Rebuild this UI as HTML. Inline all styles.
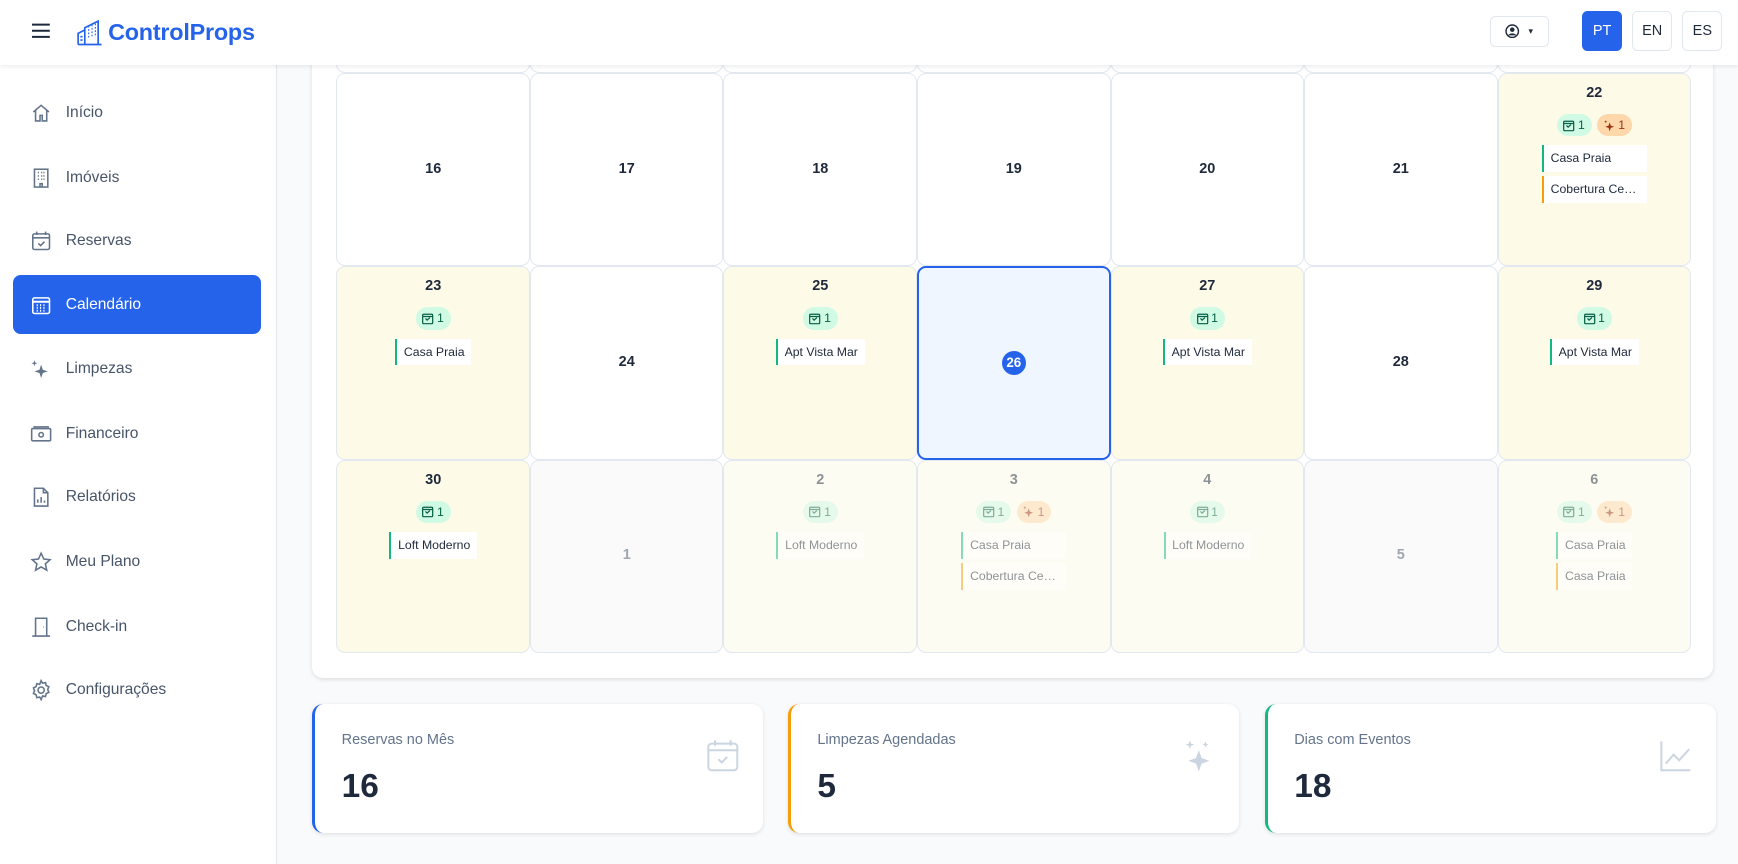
<!DOCTYPE html>
<html><head><meta charset="utf-8">
<style>
*{box-sizing:border-box;margin:0;padding:0}
html,body{width:1738px;height:864px;overflow:hidden;background:#f8fafc;font-family:"Liberation Sans",sans-serif;color:#1e293b}
#root{zoom:1.1141;width:1560px;height:776px;position:relative;overflow:hidden;background:#f8fafc}
.header{position:absolute;left:0;top:0;width:1560px;height:58px;background:#fff;box-shadow:0 2px 4px rgba(0,0,0,.08);z-index:5}
.side{position:absolute;left:0;top:58px;width:249px;height:718px;background:#fff;border-right:1px solid #e5e7eb;z-index:4}
.nav{position:absolute;left:12px;width:222px;height:53px;border-radius:7px;display:flex;align-items:center;padding-left:15px;font-size:14px;color:#475569}
.nav svg{width:20px;height:20px;margin-right:12px;fill:none;stroke:#64748b;stroke-width:1.4}
.nav.active{background:#2563eb;color:#fff}
.nav.active svg{stroke:#fff}
.card{position:absolute;left:280px;top:-200px;width:1258px;height:809px;background:#fff;border-radius:10px;box-shadow:0 1px 4px rgba(0,0,0,.12)}
.grid{position:absolute;left:302px;top:-108px;display:grid;grid-template-columns:repeat(7,173.7px);grid-auto-rows:173.5px}
.c{border:1px solid #e2e8f0;border-radius:8px;background:#fff;display:flex;flex-direction:column;align-items:center;padding-top:10px;font-size:13px;position:relative}
.c.e{justify-content:center;padding-top:0}
.c.y{background:#fefae8}
.c.o{background:#fafafa}
.c.o>*{opacity:.5}
.c.oy{background:#fdfcf2}
.c.oy>*{opacity:.5}
.n{font-weight:bold;font-size:13px;height:16px;line-height:16px;color:#1e293b}
.bd{display:flex;gap:5px;margin-top:10px;height:20px}
.p{height:20px;border-radius:10px;padding:0 6px 0 5px;display:flex;align-items:center;font-size:11px;gap:2px}
.p.g{background:#d1fae5;color:#065f46}
.p.r{background:#fed7aa;color:#9a3412}
.p svg{width:12px;height:12px}
.cw{display:flex;flex-direction:column;align-items:stretch;margin-top:8px;max-width:94px}
.ch{background:#fff;font-size:11px;height:24px;line-height:24px;padding:0 6px 0 6px;border-left:2px solid #10b981;white-space:nowrap;overflow:hidden;text-overflow:ellipsis;color:#1e293b}
.ch+.ch{margin-top:4px}
.ch.or{border-left-color:#f59e0b}
.today{background:#eff6ff;border:2px solid #2563eb;justify-content:center;padding-top:0}
.tc{width:22px;height:22px;border-radius:50%;background:#2563eb;color:#fff;font-weight:bold;font-size:12px;display:flex;align-items:center;justify-content:center}
.stat{position:absolute;top:632px;width:405px;height:116px;background:#fff;border-radius:10px;box-shadow:0 1px 4px rgba(0,0,0,.1);padding:25px 0 0 24px;border-left:3px solid}
.stat .t{font-size:13px;color:#64748b}
.stat .v{font-size:30px;font-weight:bold;color:#1e293b;margin-top:18px}
.stat svg{position:absolute;right:20px;top:30px;width:32px;height:32px;fill:none;stroke:#cbd5e1;stroke-width:1.8}
.btn{position:absolute;top:10px;height:36px;width:36px;border:1px solid #e2e8f0;border-radius:5px;font-size:13px;display:flex;align-items:center;justify-content:center;color:#1e293b;background:#fff}
</style></head><body><div id="root">

<div class="card"></div>
<div class="grid">
<div class="c"></div><div class="c"></div><div class="c"></div><div class="c"></div><div class="c"></div><div class="c"></div><div class="c"></div>
<div class="c e"><div class="n">16</div></div>
<div class="c e"><div class="n">17</div></div>
<div class="c e"><div class="n">18</div></div>
<div class="c e"><div class="n">19</div></div>
<div class="c e"><div class="n">20</div></div>
<div class="c e"><div class="n">21</div></div>
<div class="c y"><div class="n">22</div><div class="bd"><div class="p g"><svg viewBox="0 0 12 12" fill="none" stroke="#065f46" stroke-width="1.1"><rect x="1.5" y="2" width="9" height="8.5" rx="1"/><path d="M1.5 4h9M4 5.8l1.5 1.5L8 5"/></svg>1</div><div class="p r"><svg viewBox="0 0 12 12" fill="#9a3412"><path d="M6 3l1 3 3 1-3 1-1 3-1-3-3-1 3-1z"/><path d="M2.5 1l.4 1 1 .4-1 .4-.4 1-.4-1-1-.4 1-.4z"/></svg>1</div></div><div class="cw"><div class="ch">Casa Praia</div><div class="ch or">Cobertura Central</div></div></div>
<div class="c y"><div class="n">23</div><div class="bd"><div class="p g"><svg viewBox="0 0 12 12" fill="none" stroke="#065f46" stroke-width="1.1"><rect x="1.5" y="2" width="9" height="8.5" rx="1"/><path d="M1.5 4h9M4 5.8l1.5 1.5L8 5"/></svg>1</div></div><div class="cw"><div class="ch">Casa Praia</div></div></div>
<div class="c e"><div class="n">24</div></div>
<div class="c y"><div class="n">25</div><div class="bd"><div class="p g"><svg viewBox="0 0 12 12" fill="none" stroke="#065f46" stroke-width="1.1"><rect x="1.5" y="2" width="9" height="8.5" rx="1"/><path d="M1.5 4h9M4 5.8l1.5 1.5L8 5"/></svg>1</div></div><div class="cw"><div class="ch">Apt Vista Mar</div></div></div>
<div class="c today"><div class="tc">26</div></div>
<div class="c y"><div class="n">27</div><div class="bd"><div class="p g"><svg viewBox="0 0 12 12" fill="none" stroke="#065f46" stroke-width="1.1"><rect x="1.5" y="2" width="9" height="8.5" rx="1"/><path d="M1.5 4h9M4 5.8l1.5 1.5L8 5"/></svg>1</div></div><div class="cw"><div class="ch">Apt Vista Mar</div></div></div>
<div class="c e"><div class="n">28</div></div>
<div class="c y"><div class="n">29</div><div class="bd"><div class="p g"><svg viewBox="0 0 12 12" fill="none" stroke="#065f46" stroke-width="1.1"><rect x="1.5" y="2" width="9" height="8.5" rx="1"/><path d="M1.5 4h9M4 5.8l1.5 1.5L8 5"/></svg>1</div></div><div class="cw"><div class="ch">Apt Vista Mar</div></div></div>
<div class="c y"><div class="n">30</div><div class="bd"><div class="p g"><svg viewBox="0 0 12 12" fill="none" stroke="#065f46" stroke-width="1.1"><rect x="1.5" y="2" width="9" height="8.5" rx="1"/><path d="M1.5 4h9M4 5.8l1.5 1.5L8 5"/></svg>1</div></div><div class="cw"><div class="ch">Loft Moderno</div></div></div>
<div class="c e o"><div class="n" style="color:#475569">1</div></div>
<div class="c oy"><div class="n">2</div><div class="bd"><div class="p g"><svg viewBox="0 0 12 12" fill="none" stroke="#065f46" stroke-width="1.1"><rect x="1.5" y="2" width="9" height="8.5" rx="1"/><path d="M1.5 4h9M4 5.8l1.5 1.5L8 5"/></svg>1</div></div><div class="cw"><div class="ch">Loft Moderno</div></div></div>
<div class="c oy"><div class="n">3</div><div class="bd"><div class="p g"><svg viewBox="0 0 12 12" fill="none" stroke="#065f46" stroke-width="1.1"><rect x="1.5" y="2" width="9" height="8.5" rx="1"/><path d="M1.5 4h9M4 5.8l1.5 1.5L8 5"/></svg>1</div><div class="p r"><svg viewBox="0 0 12 12" fill="#9a3412"><path d="M6 3l1 3 3 1-3 1-1 3-1-3-3-1 3-1z"/><path d="M2.5 1l.4 1 1 .4-1 .4-.4 1-.4-1-1-.4 1-.4z"/></svg>1</div></div><div class="cw"><div class="ch">Casa Praia</div><div class="ch or">Cobertura Central</div></div></div>
<div class="c oy"><div class="n">4</div><div class="bd"><div class="p g"><svg viewBox="0 0 12 12" fill="none" stroke="#065f46" stroke-width="1.1"><rect x="1.5" y="2" width="9" height="8.5" rx="1"/><path d="M1.5 4h9M4 5.8l1.5 1.5L8 5"/></svg>1</div></div><div class="cw"><div class="ch">Loft Moderno</div></div></div>
<div class="c e o"><div class="n" style="color:#475569">5</div></div>
<div class="c oy"><div class="n">6</div><div class="bd"><div class="p g"><svg viewBox="0 0 12 12" fill="none" stroke="#065f46" stroke-width="1.1"><rect x="1.5" y="2" width="9" height="8.5" rx="1"/><path d="M1.5 4h9M4 5.8l1.5 1.5L8 5"/></svg>1</div><div class="p r"><svg viewBox="0 0 12 12" fill="#9a3412"><path d="M6 3l1 3 3 1-3 1-1 3-1-3-3-1 3-1z"/><path d="M2.5 1l.4 1 1 .4-1 .4-.4 1-.4-1-1-.4 1-.4z"/></svg>1</div></div><div class="cw"><div class="ch">Casa Praia</div><div class="ch or">Casa Praia</div></div></div>
</div>

<div class="stat" style="left:280px;border-left-color:#2563eb"><div class="t">Reservas no Mês</div><div class="v">16</div><svg viewBox="0 0 32 32"><rect x="3" y="5" width="26" height="24" rx="3"/><path d="M3 11h26M9 2v5M23 2v5M12 19l3 3 5-5"/></svg></div>
<div class="stat" style="left:707px;border-left-color:#f59e0b"><div class="t">Limpezas Agendadas</div><div class="v">5</div><svg viewBox="0 0 32 32" style="fill:#cbd5e1;stroke:none"><path d="M16 11l2.5 7 7 2.5-7 2.5L16 30l-2.5-7-7-2.5 7-2.5z"/><path d="M8 2l1 3 3 1-3 1-1 3-1-3-3-1 3-1z"/><path d="M22 3l.8 2 2 .8-2 .8-.8 2-.8-2-2-.8 2-.8z"/></svg></div>
<div class="stat" style="left:1135px;border-left-color:#10b981"><div class="t">Dias com Eventos</div><div class="v">18</div><svg viewBox="0 0 32 32"><path d="M3 3v26h26M7 23l7-8 5 5 9-10"/></svg></div>

<div class="header">
 <svg style="position:absolute;left:29px;top:21px" width="16" height="14" viewBox="0 0 16 14"><path d="M0 1.5h16M0 7h16M0 12.5h16" stroke="#1e293b" stroke-width="1.8"/></svg>
 <svg style="position:absolute;left:69px;top:18px" width="23" height="23" viewBox="0 0 23 23" fill="none" stroke="#2563eb" stroke-width="1.5"><path d="M1 22V12l6-3v13M7 22V7l12-6v21M1 22h21M10 6h1M13 5h1M16 4h1M10 9h1M13 8h1M16 7h1M10 12h1M13 11h1M16 10h1M10 15h1M13 14h1M16 13h1M3 15h2M3 18h2"/></svg>
 <div style="position:absolute;left:97px;top:17px;font-size:21px;font-weight:bold;color:#2563eb;letter-spacing:-.2px">ControlProps</div>
 <div class="btn" style="left:1337px;top:14px;width:53px;height:28px"><svg width="13" height="13" viewBox="0 0 14 14"><circle cx="7" cy="7" r="6" fill="none" stroke="#1e293b" stroke-width="1.4"/><circle cx="7" cy="5.5" r="2.2" fill="#1e293b"/><path d="M3 11c1.5-2.5 6.5-2.5 8 0" fill="#1e293b"/></svg><span style="margin-left:8px;font-size:8px">▾</span></div>
 <div class="btn" style="left:1420px;background:#2563eb;border-color:#2563eb;color:#fff">PT</div>
 <div class="btn" style="left:1465px">EN</div>
 <div class="btn" style="left:1510px">ES</div>
</div>

<div class="side">
 <div class="nav" style="top:17px"><svg viewBox="0 0 20 20"><path d="M3 9l7-6 7 6M5 7.5V17h4v-5h2v5h4V7.5"/></svg>Início</div>
 <div class="nav" style="top:75px"><svg viewBox="0 0 20 20"><rect x="4" y="2" width="12" height="16"/><path d="M7 5h1M10 5h1M7 8h1M10 8h1M7 11h1M10 11h1M12 5h1M12 8h1M12 11h1M9 18v-3h2v3"/></svg>Imóveis</div>
 <div class="nav" style="top:132px"><svg viewBox="0 0 20 20"><rect x="2.5" y="3.5" width="15" height="14" rx="1.5"/><path d="M2.5 7h15M6 1.5v3M14 1.5v3M7.5 12l2 2 3.5-3.5"/></svg>Reservas</div>
 <div class="nav active" style="top:189px"><svg viewBox="0 0 20 20"><rect x="2.5" y="3.5" width="15" height="14" rx="1.5"/><path d="M2.5 7h15M6 10h1M9 10h1M12 10h1M6 12.5h1M9 12.5h1M12 12.5h1M6 15h1M9 15h1M12 15h1" stroke-width="1.8"/></svg>Calendário</div>
 <div class="nav" style="top:247px"><svg viewBox="0 0 20 20" style="fill:#64748b;stroke:none"><path d="M10 6l1.5 4.5L16 12l-4.5 1.5L10 18l-1.5-4.5L4 12l4.5-1.5z"/><path d="M4 2l.7 2 2 .7-2 .7L4 7.4l-.7-2-2-.7 2-.7z"/></svg>Limpezas</div>
 <div class="nav" style="top:305px"><svg viewBox="0 0 20 20"><rect x="1.5" y="5" width="17" height="11" rx="1"/><circle cx="10" cy="10.5" r="2"/><path d="M3 3.5h14"/></svg>Financeiro</div>
 <div class="nav" style="top:362px"><svg viewBox="0 0 20 20"><path d="M4 2h8l4 4v12H4zM12 2v4h4M7 15v-3M10 15v-5M13 15v-2"/></svg>Relatórios</div>
 <div class="nav" style="top:420px"><svg viewBox="0 0 20 20"><path d="M10 2l2.4 5.2 5.6.6-4.2 3.8 1.2 5.6L10 14.3 5 17.2l1.2-5.6L2 7.8l5.6-.6z"/></svg>Meu Plano</div>
 <div class="nav" style="top:478px"><svg viewBox="0 0 20 20"><path d="M5 18V2h10v16M2 18h16M12 10h.5"/></svg>Check-in</div>
 <div class="nav" style="top:535px"><svg viewBox="0 0 20 20"><circle cx="10" cy="10" r="2.8"/><path d="M10 1.5l1.3 2.3 2.6-.6.6 2.6 2.4 1.2-1 2.5 1 2.5-2.4 1.2-.6 2.6-2.6-.6L10 18.5l-1.3-2.3-2.6.6-.6-2.6-2.4-1.2 1-2.5-1-2.5 2.4-1.2.6-2.6 2.6.6z"/></svg>Configurações</div>
</div>
</div></body></html>
